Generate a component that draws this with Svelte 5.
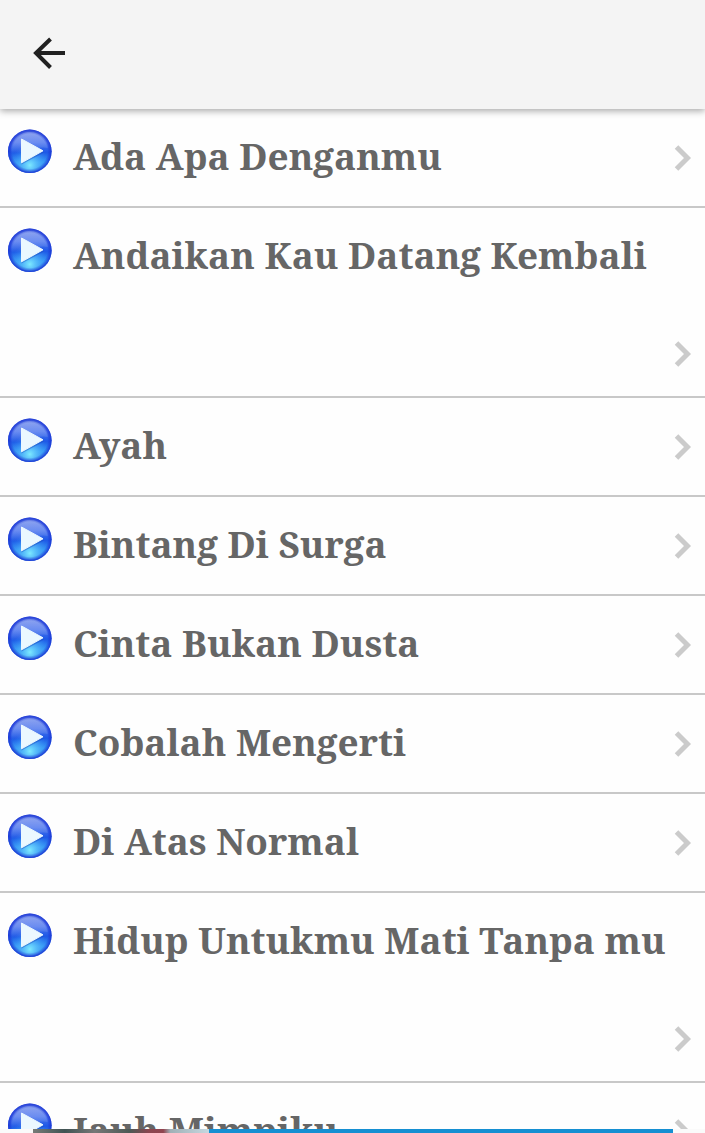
<script>
	const songs = [
		{ title: 'Ada Apa Denganmu' },
		{ title: 'Andaikan Kau Datang Kembali', tall: true },
		{ title: 'Ayah' },
		{ title: 'Bintang Di Surga' },
		{ title: 'Cinta Bukan Dusta' },
		{ title: 'Cobalah Mengerti' },
		{ title: 'Di Atas Normal' },
		{ title: 'Hidup Untukmu Mati Tanpa mu', tall: true },
		{ title: 'Jauh Mimpiku' }
	];
</script>

<div class="screen">
	<header class="toolbar">
		<button class="back" aria-label="Back">
			<svg width="36" height="36" viewBox="0 0 36 36">
				<path d="M34 18H6M19.500 4L5 18l14.500 14.500" />
			</svg>
		</button>
	</header>

	<ul class="songs">
		{#each songs as song}
			<li class="song" class:tall={song.tall}>
				<svg class="play" width="44" height="45" viewBox="0 0 44 45">
					<defs>
						<linearGradient id="ball" x1="0" y1="0" x2="0" y2="1">
							<stop offset="0" stop-color="#5675e6" />
							<stop offset="0.3" stop-color="#4a74ee" />
							<stop offset="0.52" stop-color="#1e58e6" />
							<stop offset="0.75" stop-color="#3494f2" />
							<stop offset="1" stop-color="#2f7fe4" />
						</linearGradient>
						<radialGradient id="glow" cx="0.5" cy="0.84" r="0.48">
							<stop offset="0" stop-color="#7eeaff" />
							<stop offset="1" stop-color="#38a0ff" stop-opacity="0" />
						</radialGradient>
						<linearGradient id="shine" x1="0" y1="0" x2="0" y2="1">
							<stop offset="0" stop-color="#fff" stop-opacity="0.34" />
							<stop offset="1" stop-color="#fff" stop-opacity="0.02" />
						</linearGradient>
						<radialGradient id="rim">
							<stop offset="0.8" stop-color="#1c34d4" stop-opacity="0" />
							<stop offset="1" stop-color="#1c34d4" stop-opacity="0.9" />
						</radialGradient>
					</defs>
					<circle cx="21.800" cy="22.300" r="21.800" fill="url(#ball)" />
					<circle cx="21.800" cy="22.300" r="20.500" fill="url(#glow)" />
					<path d="M3 24C2 11 11 3 22 3S40 11 40 19C29 16 17 25 3 24Z" fill="url(#shine)" />
					<circle cx="21.800" cy="22.300" r="21.800" fill="url(#rim)" />
					<path d="M13.500 11L36 23.500L13.500 35.500Z" fill="#1542b8" opacity="0.4" />
					<path d="M13.500 10L35 21.800L13.500 33.800Z" fill="#ebf8ff" stroke="#ebf8ff" stroke-width="1" stroke-linejoin="round" />
				</svg>
				<span class="title">{song.title}</span>
				<svg class="chevron" width="18" height="26" viewBox="0 0 18 26">
					<path d="M2.500 2L13.500 13L2.500 24" />
				</svg>
			</li>
		{/each}
	</ul>

	<div class="banner">
		<div class="thumb"></div>
		<div class="ad"></div>
	</div>
</div>

<style>
	:global(body) {
		overflow: hidden;
	}

	.screen {
		position: relative;
		height: 1133px;
		overflow: hidden;
		background: #fefefe;
		font-family: 'Droid Serif', 'Noto Serif', 'DejaVu Serif', serif;
	}

	.toolbar {
		position: relative;
		display: flex;
		align-items: center;
		box-sizing: border-box;
		height: 109px;
		padding: 0 31px 3px;
		background: #f4f4f4;
		box-shadow: 0 2px 7px rgba(0, 0, 0, 0.35);
	}

	.back {
		display: flex;
		padding: 0;
		border: 0;
		background: none;
	}

	.back path {
		fill: none;
		stroke: #212121;
		stroke-width: 4;
	}

	.songs {
		margin: 0;
		padding: 0;
		list-style: none;
	}

	.song {
		display: flex;
		align-items: flex-start;
		box-sizing: border-box;
		height: 99px;
		padding: 20px 13px 0 8px;
		border-bottom: 2px solid #c8c8c8;
	}

	.song.tall {
		height: 190px;
	}

	.play {
		flex: none;
	}

	.title {
		flex: none;
		margin: 1px -20px 0 21px;
		font-size: 36.95px;
		font-weight: bold;
		line-height: 52px;
		white-space: nowrap;
		color: #666;
	}

	.chevron {
		flex: none;
		margin: 16px 0 0 auto;
	}

	.tall .chevron {
		align-self: flex-end;
		margin: 0 0 29px auto;
	}

	.chevron path {
		fill: none;
		stroke: #cbcbcb;
		stroke-width: 5;
	}

	/* ad strip pinned over the end of the list */
	.banner {
		position: absolute;
		left: 0;
		right: 0;
		bottom: 0;
		display: flex;
		height: 4px;
		padding: 0 32px 0 33px;
		background: #fafafa;
	}

	.thumb {
		width: 176px;
		background: linear-gradient(90deg, #777b77, #405353 18%, #777 35%, #4c5955 55%, #8b4650 66%, #91444f 74%, #a0b0b6 78%, #c6d8e0);
	}

	.ad {
		flex: 1;
		background: #158fd2;
	}
</style>
